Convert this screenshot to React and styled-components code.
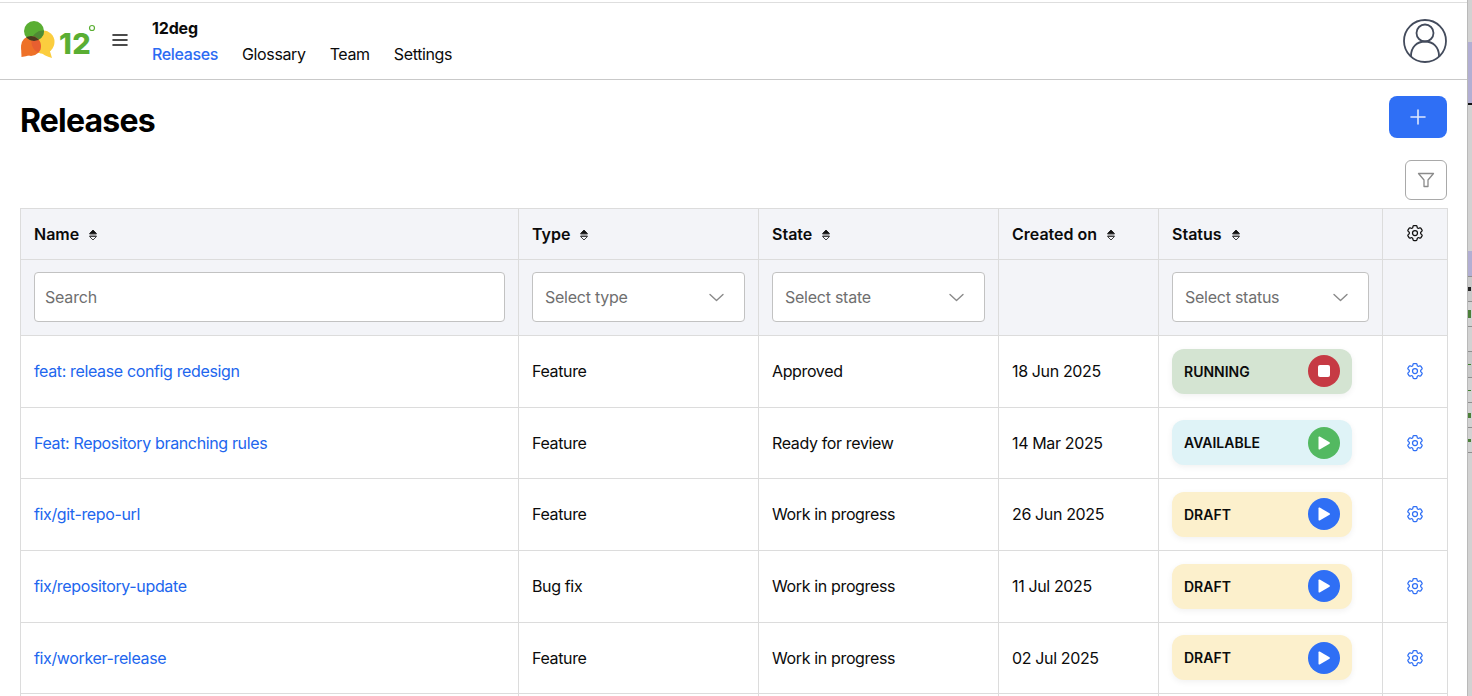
import React from 'react';
import styled, { createGlobalStyle } from 'styled-components';
import { HiOutlineCog6Tooth } from 'react-icons/hi2';

const Global = createGlobalStyle`
  html, body { margin: 0; padding: 0; height: 100%; background: #fff; overflow: hidden; }
  body { font-family: Inter, "Liberation Sans", sans-serif; font-size: 16px; color: #0b0b0b; letter-spacing: -0.36px; }
  * { box-sizing: border-box; }
`;

const Shell = styled.div`display: flex; width: 1472px; height: 696px; overflow: hidden;`;
const Main = styled.main`width: 1467px; height: 696px; overflow: hidden; padding-top: 2px;`;

const Strip = styled.aside`
  width: 5px; height: 696px; display: flex; flex-direction: column;
  background: #d2d2d2; border-left: 1px solid #b9b9b9;
`;
const StripBlock = styled.div`
  height: ${p => p.$h}px; flex: none; display: flex; align-items: center;
  background: ${p => p.$bg || 'transparent'};
  border-bottom: ${p => p.$line ? `1px solid ${p.$line}` : '0'};
`;
const StripMark = styled.div`
  width: 3px; height: ${p => p.$h}px; background: ${p => p.$c};
`;

const Header = styled.header`
  height: 78px; border-top: 1px solid #dedede; border-bottom: 1px solid #c9c9c9;
  display: flex; align-items: center; padding: 0 20px 0 20px;
`;
const LogoBox = styled.div`width: 76px; height: 44px; flex: none; margin-top: -2px;`;
const MenuButton = styled.button`
  width: 18px; height: 18px; margin-left: 15px; padding: 0; border: 0; background: none; flex: none;
  display: flex; align-items: center; justify-content: center; margin-top: -2px;
`;
const Brand = styled.div`margin-left: 23px; display: flex; flex-direction: column; gap: 3px; flex: 1; margin-top: 1px;`;
const BrandName = styled.div`font-weight: 700; font-size: 16px; line-height: 22px; letter-spacing: -0.15px;`;
const Nav = styled.nav`display: flex; gap: 24px;`;
const NavLink = styled.a`font-size: 16px; line-height: 24px; color: ${p => p.$active ? '#2b6bf3' : '#0b0b0b'}; font-weight: ${p => p.$active ? 500 : 400};`;
const Avatar = styled.div`width: 44px; height: 44px; flex: none;`;

const Content = styled.div`padding: 0 20px;`;
const TitleRow = styled.div`display: flex; justify-content: space-between; align-items: flex-start; padding-top: 16px;`;
const Title = styled.h1`margin: 0; padding-top: 4px; font-size: 32px; line-height: 42px; font-weight: 700; color: #000; letter-spacing: -0.8px;`;
const AddButton = styled.button`
  width: 58px; height: 42px; border: 0; border-radius: 8px; background: #2f6ff5; padding: 0;
  display: flex; align-items: center; justify-content: center;
`;
const Tools = styled.div`display: flex; justify-content: flex-end; padding-top: 18px; padding-bottom: 8px;`;
const FilterButton = styled.button`
  width: 42px; height: 40px; border: 1px solid #a9a9a9; border-radius: 6px; background: #fff; padding: 0;
  display: flex; align-items: center; justify-content: center;
`;

const Table = styled.table`
  width: 1427px; table-layout: fixed; border-collapse: collapse; border-spacing: 0;
  border: 1px solid #dcdcdc;
`;
const Th = styled.th`
  height: 50.5px; padding: 0 13px; text-align: left; background: #f3f4f8; border: 1px solid #dcdcdc;
  font-size: 16px; font-weight: 600; color: #0b0b0b; letter-spacing: 0;
`;
const ThInner = styled.span`display: inline-flex; align-items: center; gap: 9px;`;
const SortSlot = styled.span`display: block; height: 12px; margin-top: 2px;`;
const FilterCell = styled.td`
  height: 76px; padding: 0 13px; background: #f3f4f8; border: 1px solid #dcdcdc;
`;
const Search = styled.input`
  display: block; width: 100%; height: 50px; padding: 0 10px; border: 1px solid #c2c2c2; border-radius: 4px;
  font: 400 16px Inter, "Liberation Sans", sans-serif; background: #fff; letter-spacing: -0.2px;
  &::placeholder { color: #6f6f6f; opacity: 1; }
`;
const Select = styled.div`
  height: 50px; padding: 0 12px; border: 1px solid #c2c2c2; border-radius: 4px; background: #fff;
  display: flex; align-items: center; justify-content: space-between;
  color: #6f6f6f; font-size: 16px; letter-spacing: -0.25px;
  svg { margin-right: 8px; }
`;
const Td = styled.td`
  height: ${p => p.$h || 72}px; padding: 0 13px; border: 1px solid #dcdcdc; font-size: 16px; color: #0b0b0b;
  text-align: ${p => p.$center ? 'center' : 'left'};
`;
const RowLink = styled.a`color: #2166ee;`;
const Chip = styled.div`
  width: 180px; height: 45px; border-radius: 12px; padding: 0 12px; background: ${p => p.$bg};
  display: flex; align-items: center; justify-content: space-between;
  box-shadow: 0 2px 6px rgba(0,0,0,0.06);
  font-size: 14px; font-weight: 600; letter-spacing: 0; color: #0b0b0b;
`;
const ChipAction = styled.button`
  width: 32px; height: 32px; border-radius: 50%; border: 0; padding: 0; background: ${p => p.$bg};
  display: flex; align-items: center; justify-content: center;
`;
const GearHead = styled(HiOutlineCog6Tooth)`display: block; margin: -1px auto 0; color: #111;`;
const GearRow = styled(HiOutlineCog6Tooth)`display: block; margin: 0 auto; color: #2f6ff5;`;

const Logo = () => (
  <svg width="76" height="44" viewBox="0 0 76 44">
    <defs>
      <clipPath id="lgYellow"><circle cx="23" cy="24" r="11.500" /></clipPath>
      <clipPath id="lgOrange"><circle cx="11" cy="28" r="10" /></clipPath>
    </defs>
    <circle cx="23" cy="24" r="11.500" fill="#fbcd3e" />
    <path d="M29 30 L32 40 Q24 38 19 33z" fill="#fbcd3e" />
    <circle cx="11" cy="28" r="10" fill="#ee7128" />
    <path d="M1 28 L1.500 39 Q6 38.500 10 37z" fill="#ee7128" />
    <circle cx="14" cy="13" r="10" fill="#5aae33" />
    <g clipPath="url(#lgYellow)">
      <circle cx="14" cy="13" r="10" fill="#4f8a34" />
      <circle cx="11" cy="28" r="10" fill="#e75f30" />
    </g>
    <g clipPath="url(#lgOrange)">
      <circle cx="14" cy="13" r="10" fill="#4a3a1f" />
    </g>
    <text x="39" y="35.500" fontFamily="Inter, sans-serif" fontWeight="800" fontSize="29" fill="#5aae33" letterSpacing="0.5">12</text>
    <circle cx="72" cy="10" r="2.500" fill="none" stroke="#5aae33" strokeWidth="1.200" />
  </svg>
);
const Hamburger = () => (
  <svg width="18" height="18" viewBox="0 0 18 18" fill="none" stroke="#111" strokeWidth="1.6" strokeLinecap="round">
    <path d="M2 4h14M2 9h14M2 14h14" />
  </svg>
);
const UserIcon = () => (
  <svg width="44" height="44" viewBox="0 0 44 44" fill="none" stroke="#434b5c" strokeWidth="1.8">
    <circle cx="22" cy="22" r="21" />
    <circle cx="22" cy="14" r="8.500" />
    <path d="M8 37 c0 -9 6 -14.500 14 -14.500 s14 5.500 14 14.500" />
  </svg>
);
const Plus = () => (
  <svg width="16" height="16" viewBox="0 0 16 16" stroke="#dfe8fd" strokeWidth="1.6" strokeLinecap="round">
    <path d="M8 1v14M1 8h14" />
  </svg>
);
const Funnel = () => (
  <svg width="18" height="18" viewBox="0 0 18 18" fill="none" stroke="#8b8b8b" strokeWidth="1.3" strokeLinejoin="round">
    <path d="M1.500 2.500h15l-5.500 6.500v6.500h-4v-6.500z" />
  </svg>
);
const Sort = () => (
  <svg display="block" width="10" height="12" viewBox="0 0 10 12" fill="#111" stroke="#111" strokeWidth="0.8" strokeLinejoin="round">
    <path d="M5 1 l3.500 3.500h-7z" />
    <path d="M1.500 6h7" fill="none" />
    <path d="M5 11 l3.500 -3.500h-7z" fill="none" />
  </svg>
);
const Chevron = () => (
  <svg width="15" height="9" viewBox="0 0 15 9" fill="none" stroke="#8a8a8a" strokeWidth="1.4" strokeLinecap="round" strokeLinejoin="round">
    <path d="M1 1.500l6.500 6 6.500 -6" />
  </svg>
);
const PlayIcon = () => (
  <svg width="14" height="14" viewBox="0 0 14 14" fill="#fff"><path d="M1.500 1.200 Q1.500 0 2.700 0.600 L12.500 6.200 Q13.500 7 12.500 7.800 L2.700 13.400 Q1.500 14 1.500 12.800z" /></svg>
);
const StopIcon = () => (
  <svg width="12" height="12" viewBox="0 0 12 12" fill="#fff"><rect width="12" height="12" rx="2" /></svg>
);

const stripParts = [
  { h: 42 }, { h: 61, bg: '#b2afd3' }, { h: 2, bg: '#111' }, { h: 146 },
  { h: 26, bg: '#b2afd3', line: '#8f8f8f' },
  { h: 25, bg: '#c9c9c9', line: '#8f8f8f', mark: { h: 4, c: '#222' } },
  { h: 25, line: '#8f8f8f', mark: { h: 8, c: '#4c7f3a' } },
  { h: 25, line: '#8f8f8f' },
  { h: 26, bg: '#c9c9c9', line: '#8f8f8f', mark: { h: 1, c: '#3f7f2e' } },
  { h: 25, line: '#8f8f8f', mark: { h: 1, c: '#3f7f2e' } },
  { h: 25, line: '#8f8f8f', mark: { h: 5, c: '#4c7f3a' } },
  { h: 25, line: '#8f8f8f', mark: { h: 3, c: '#4c7f3a' } },
];

const rows = [
  { h: 72, name: 'feat: release config redesign', type: 'Feature', state: 'Approved', date: '18 Jun 2025', status: 'RUNNING', bg: '#d4e4d2', btn: '#c63a44', icon: <StopIcon /> },
  { h: 71, name: 'Feat: Repository branching rules', type: 'Feature', state: 'Ready for review', date: '14 Mar 2025', status: 'AVAILABLE', bg: '#dff3f7', btn: '#53b961', icon: <PlayIcon /> },
  { h: 72, name: 'fix/git-repo-url', type: 'Feature', state: 'Work in progress', date: '26 Jun 2025', status: 'DRAFT', bg: '#fcf0cc', btn: '#2f6ff5', icon: <PlayIcon /> },
  { h: 72, name: 'fix/repository-update', type: 'Bug fix', state: 'Work in progress', date: '11 Jul 2025', status: 'DRAFT', bg: '#fcf0cc', btn: '#2f6ff5', icon: <PlayIcon /> },
  { h: 71, name: 'fix/worker-release', type: 'Feature', state: 'Work in progress', date: '02 Jul 2025', status: 'DRAFT', bg: '#fcf0cc', btn: '#2f6ff5', icon: <PlayIcon /> },
];

const widths = [498, 240, 240, 160, 224, 65];

export default function App() {
  return (
    <Shell>
      <Global />
      <Main>
        <Header>
          <LogoBox><Logo /></LogoBox>
          <MenuButton aria-label="Menu"><Hamburger /></MenuButton>
          <Brand>
            <BrandName>12deg</BrandName>
            <Nav>
              <NavLink $active>Releases</NavLink>
              <NavLink>Glossary</NavLink>
              <NavLink>Team</NavLink>
              <NavLink>Settings</NavLink>
            </Nav>
          </Brand>
          <Avatar><UserIcon /></Avatar>
        </Header>
        <Content>
          <TitleRow>
            <Title>Releases</Title>
            <AddButton aria-label="Add"><Plus /></AddButton>
          </TitleRow>
          <Tools>
            <FilterButton aria-label="Filter"><Funnel /></FilterButton>
          </Tools>
          <Table>
            <colgroup>
              {widths.map((w, i) => <col key={i} style={{ width: w }} />)}
            </colgroup>
            <thead>
              <tr>
                {['Name', 'Type', 'State', 'Created on', 'Status'].map(h => (
                  <Th key={h}><ThInner>{h}<SortSlot><Sort /></SortSlot></ThInner></Th>
                ))}
                <Th><GearHead size={20} /></Th>
              </tr>
              <tr>
                <FilterCell><Search placeholder="Search" /></FilterCell>
                <FilterCell><Select>Select type<Chevron /></Select></FilterCell>
                <FilterCell><Select>Select state<Chevron /></Select></FilterCell>
                <FilterCell />
                <FilterCell><Select>Select status<Chevron /></Select></FilterCell>
                <FilterCell />
              </tr>
            </thead>
            <tbody>
              {rows.map(r => (
                <tr key={r.name}>
                  <Td $h={r.h}><RowLink>{r.name}</RowLink></Td>
                  <Td $h={r.h}>{r.type}</Td>
                  <Td $h={r.h}>{r.state}</Td>
                  <Td $h={r.h}>{r.date}</Td>
                  <Td $h={r.h}>
                    <Chip $bg={r.bg}>{r.status}<ChipAction $bg={r.btn}>{r.icon}</ChipAction></Chip>
                  </Td>
                  <Td $h={r.h} $center><GearRow size={20} /></Td>
                </tr>
              ))}
              <tr>{widths.map((w, i) => <Td key={i} />)}</tr>
            </tbody>
          </Table>
        </Content>
      </Main>
      <Strip>
        {stripParts.map((s, i) => (
          <StripBlock key={i} $h={s.h} $bg={s.bg} $line={s.line}>
            {s.mark && <StripMark $h={s.mark.h} $c={s.mark.c} />}
          </StripBlock>
        ))}
      </Strip>
    </Shell>
  );
}
